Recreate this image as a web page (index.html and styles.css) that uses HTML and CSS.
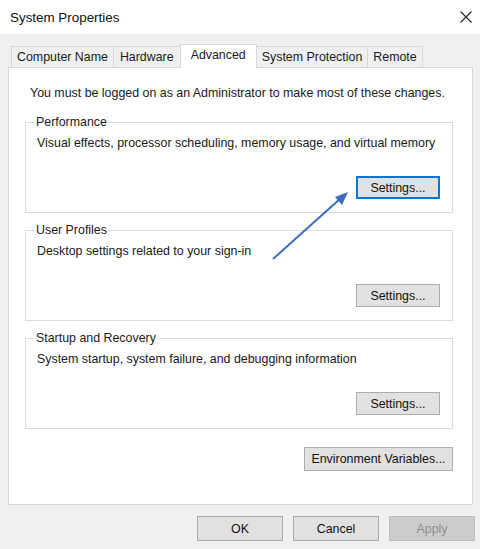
FILE: index.html
```html
<!DOCTYPE html>
<html lang="en">
<head>
    <meta charset="UTF-8">
    <title>System Properties</title>
    <link rel="stylesheet" href="styles.css">
</head>
<body>
    <div class="window">
        <div class="titlebar">
            <span class="title">System Properties</span>
            <svg class="close" width="12" height="12" viewBox="0 0 12 12">
                <path d="M0.5 0.5 L11.5 11.5 M11.5 0.5 L0.5 11.5" stroke="#222" stroke-width="1.1" fill="none"/>
            </svg>
        </div>

        <div class="dialog">
            <div class="tabs">
                <div class="tab">Computer Name</div>
                <div class="tab">Hardware</div>
                <div class="tab active">Advanced</div>
                <div class="tab">System Protection</div>
                <div class="tab">Remote</div>
            </div>

            <div class="panel">
                <p class="note">You must be logged on as an Administrator to make most of these changes.</p>

                <fieldset class="group">
                    <legend>Performance</legend>
                    <p class="desc">Visual effects, processor scheduling, memory usage, and virtual memory</p>
                    <button class="btn focused">Settings...</button>
                </fieldset>

                <fieldset class="group">
                    <legend>User Profiles</legend>
                    <p class="desc">Desktop settings related to your sign-in</p>
                    <button class="btn">Settings...</button>
                </fieldset>

                <fieldset class="group">
                    <legend>Startup and Recovery</legend>
                    <p class="desc">System startup, system failure, and debugging information</p>
                    <button class="btn">Settings...</button>
                </fieldset>

                <div class="env-row">
                    <button class="btn env">Environment Variables...</button>
                </div>
            </div>

            <div class="actions">
                <button class="btn wide">OK</button>
                <button class="btn wide">Cancel</button>
                <button class="btn wide" disabled>Apply</button>
            </div>
        </div>

        <!-- annotation arrow pointing at the Performance settings button -->
        <svg class="pointer" width="480" height="549" viewBox="0 0 480 549">
            <line x1="273" y1="259" x2="341" y2="198" stroke="#3c6cc2" stroke-width="2"/>
            <polygon points="348,192 335,197 342,205" fill="#3c6cc2"/>
        </svg>
    </div>
</body>
</html>
```

FILE: styles.css
```css
* {
    margin: 0;
    padding: 0;
    box-sizing: border-box;
}

body {
    font-family: 'Liberation Sans', Arial, sans-serif;
    font-size: 12.4px;
    color: #1a1a1a;
    background-color: #f0f0f0;
}

.window {
    position: relative;
    width: 480px;
    height: 549px;
    overflow: hidden;
}

.titlebar {
    height: 34px;
    background: #fff;
    display: flex;
    justify-content: space-between;
    align-items: center;
    padding: 0 8px 0 10px;
}

.title {
    font-size: 13.4px;
    color: #111;
}

.dialog {
    padding: 10px 7px 0 8px;
}

/* tab strip */
.tabs {
    display: flex;
    align-items: flex-end;
    height: 23px;
    padding-left: 3px;
}

.tab {
    height: 21px;
    line-height: 20px;
    padding: 0 5px;
    background: #f0f0f0;
    border: 1px solid #d9d9d9;
    border-bottom: none;
    margin-left: -1px;
    white-space: nowrap;
}

.tab:first-child {
    margin-left: 0;
}

.tab:nth-child(2) {
    padding: 0 6px;
}

.tab.active {
    height: 24px;
    line-height: 21px;
    background: #fff;
    margin-bottom: -1px;
    position: relative;
    z-index: 1;
    padding: 0 10px;
}

.panel {
    height: 438px;
    background: #fff;
    border: 1px solid #d9d9d9;
    padding: 17px 19px 0 16px;
}

.note {
    line-height: 16px;
    padding-left: 5px;
    margin-bottom: 13px;
}

/* group boxes */
.group {
    display: flex;
    flex-direction: column;
    border: 1px solid #dcdcdc;
    padding: 0 12px 13px 11px;
    margin-bottom: 9px;
}

.group legend {
    line-height: 16px;
    margin-left: -2px;
    padding: 0 1px;
}

.desc {
    line-height: 16px;
    margin-top: 5px;
}

.group .btn {
    align-self: flex-end;
    margin-top: 25px;
}

.btn {
    font-family: inherit;
    font-size: 12.4px;
    color: #111;
    width: 84px;
    height: 23px;
    background: #e1e1e1;
    border: 1px solid #adadad;
}

.btn.focused {
    border-color: #0078d7;
    box-shadow: inset 0 0 0 1px #0078d7;
}

.env-row {
    display: flex;
    justify-content: flex-end;
    margin-top: 18px;
}

.btn.env {
    width: 149px;
    height: 24px;
}

.actions {
    display: flex;
    justify-content: flex-end;
    gap: 10px;
    margin-top: 11px;
    margin-right: -2px;
}

.btn.wide {
    width: 86px;
    height: 25px;
}

.btn:disabled {
    background: #cccccc;
    border-color: #bfbfbf;
    color: #8e8e8e;
}

.pointer {
    position: absolute;
    top: 0;
    left: 0;
    pointer-events: none;
}
```
